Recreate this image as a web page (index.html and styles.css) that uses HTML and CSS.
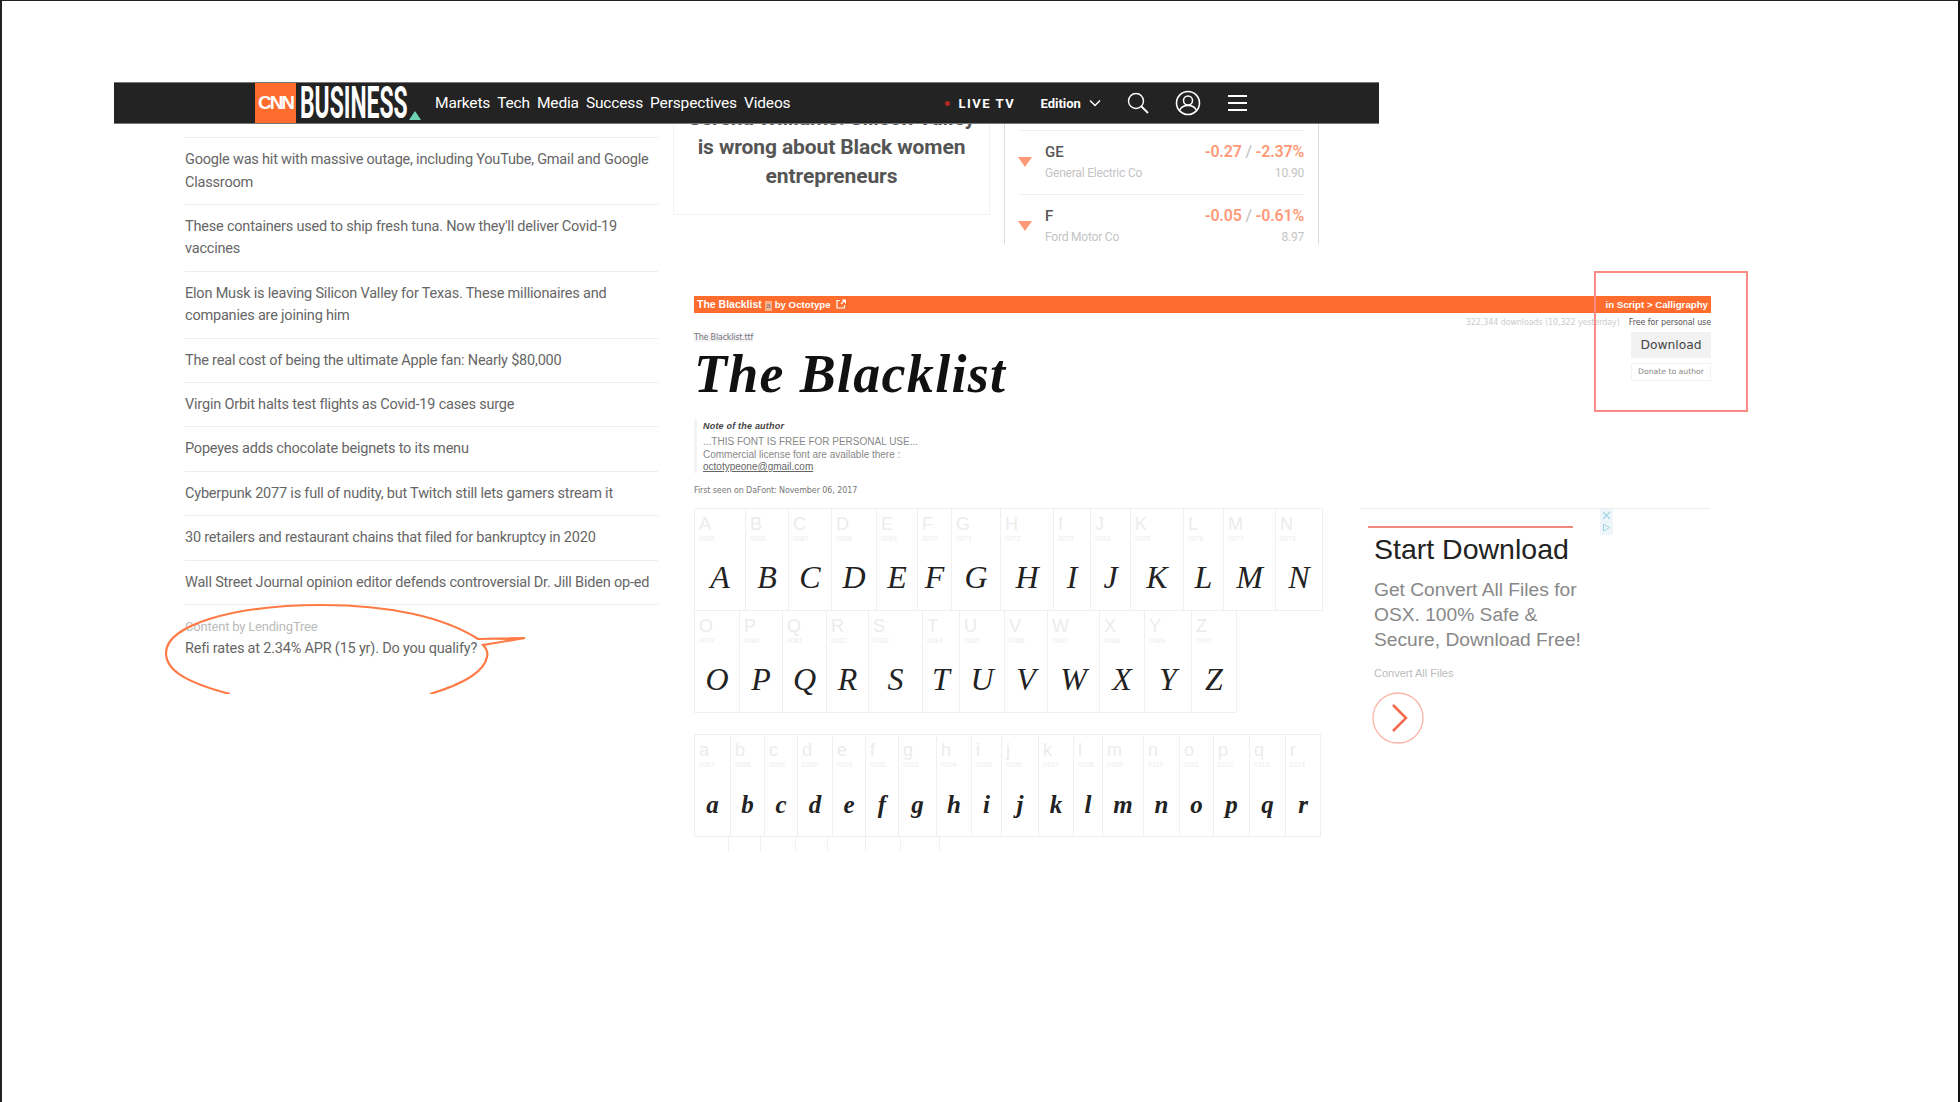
FILE: index.html
```html
<!DOCTYPE html>
<html lang="en">
<head>
<meta charset="utf-8">
<title>CNN Business clipping</title>
<link rel="stylesheet" href="styles.css">
</head>
<body>
<div class="slide">

  <section class="cnn">
    <header class="navbar">
      <div class="brand">
        <span class="cnn-logo">CNN</span>
        <span class="biz">BUSINESS</span>
        <svg class="tri" width="12" height="9" viewBox="0 0 12 9"><path d="M6 0L12 9H0z" fill="#6fd3b5"/></svg>
      </div>
      <nav class="links"><span>Markets</span><span>Tech</span><span>Media</span><span>Success</span><span>Perspectives</span><span>Videos</span></nav>
      <div class="tools">
        <span class="dot"></span><span class="live">LIVE TV</span>
        <span class="edition">Edition</span>
        <svg class="chev" width="12" height="8" viewBox="0 0 12 8"><path d="M1 1.500l5 5 5-5" fill="none" stroke="#fff" stroke-width="1.500"/></svg>
        <svg class="search" width="22" height="22" viewBox="0 0 22 22"><circle cx="9" cy="9" r="7.500" fill="none" stroke="#fff" stroke-width="1.400"/><path d="M14.500 14.500l6.500 6.500" stroke="#fff" stroke-width="1.800"/></svg>
        <svg class="user" width="26" height="26" viewBox="0 0 26 26"><circle cx="13" cy="13" r="11.500" fill="none" stroke="#fff" stroke-width="1.600"/><circle cx="13" cy="10.500" r="4.500" fill="none" stroke="#fff" stroke-width="1.500"/><path d="M4.500 20.500c1.500-3.500 5-5 8.500-5s7 1.500 8.500 5" fill="none" stroke="#fff" stroke-width="1.500"/></svg>
        <div class="burger"><i></i><i></i><i></i></div>
      </div>
    </header>
    <div class="cnn-body">
      <ul class="news">
        <li>Google was hit with massive outage, including YouTube, Gmail and Google Classroom</li>
        <li>These containers used to ship fresh tuna. Now they'll deliver Covid-19 vaccines</li>
        <li>Elon Musk is leaving Silicon Valley for Texas. These millionaires and companies are joining him</li>
        <li>The real cost of being the ultimate Apple fan: Nearly $80,000</li>
        <li>Virgin Orbit halts test flights as Covid-19 cases surge</li>
        <li>Popeyes adds chocolate beignets to its menu</li>
        <li>Cyberpunk 2077 is full of nudity, but Twitch still lets gamers stream it</li>
        <li>30 retailers and restaurant chains that filed for bankruptcy in 2020</li>
        <li>Wall Street Journal opinion editor defends controversial Dr. Jill Biden op-ed</li>
        <li class="sponsored"><small>Content by LendingTree</small>Refi rates at 2.34% APR (15 yr). Do you qualify?</li>
      </ul>
      <article class="feature"><h2>Serena Williams: Silicon Valley<br>is wrong about Black women<br>entrepreneurs</h2></article>
      <aside class="stocks">
        <div class="stock">
          <span class="down"></span>
          <div class="stock-main"><b>GE</b><small>General Electric Co</small></div>
          <div class="stock-num"><b>-0.27 <i>/</i> -2.37%</b><small>10.90</small></div>
        </div>
        <div class="stock">
          <span class="down"></span>
          <div class="stock-main"><b>F</b><small>Ford Motor Co</small></div>
          <div class="stock-num"><b>-0.05 <i>/</i> -0.61%</b><small>8.97</small></div>
        </div>
      </aside>
    </div>
    <svg class="bubble" width="380" height="91" viewBox="0 0 380 91"><path d="M66 91C24 80 2 68 2 50C2 22 70 2 158 2C225 2 280 14 314 36L361 35L319 42C323 46 324 50 323 54C320 70 296 82 266 91" fill="none" stroke="#ff7a45" stroke-width="2.200"/></svg>
  </section>

  <section class="dafont">
    <div class="titlebar"><span class="t-left"><b>The Blacklist</b> <em class="fonticon">a</em> <span class="by">by Octotype</span> <svg width="10" height="10" viewBox="0 0 10 10"><path d="M4 1.500H1v7.500h7.500V6M5 5l4-4M6 1h3.500v3.500" fill="none" stroke="#fff" stroke-width="1.200"/></svg></span><span class="t-right">in Script &gt; Calligraphy</span></div>
    <div class="meta-row"><span class="dl">322,344 downloads (10,322 yesterday)</span><span class="lic">Free for personal use</span></div>
    <div class="head">
      <div class="head-main">
        <div class="ttf">The Blacklist.ttf</div>
        <div class="sample">The Blacklist</div>
        <div class="note">
          <strong>Note of the author</strong>
          <p>...THIS FONT IS FREE FOR PERSONAL USE...<br>Commercial license font are available there :<br><u>octotypeone@gmail.com</u></p>
        </div>
        <div class="seen">First seen on DaFont: November 06, 2017</div>
      </div>
      <div class="actions"><button class="dl-btn">Download</button><button class="donate">Donate to author</button></div>
    </div>
    <div class="lower">
      <div class="glyphs" id="glyphs">
        <div class="row r1"></div>
        <div class="row r2"></div>
        <div class="row r3"></div>
        <div class="row r4"></div>
      </div>
      <div class="ad">
        <div class="adclose"><svg width="13" height="26" viewBox="0 0 13 26"><rect width="13" height="26" fill="#eef6fa"/><path d="M3 3l7 7M10 3l-7 7" stroke="#9fd5e6" stroke-width="1.200"/><path d="M3.500 15l6 3.500-6 3.500z" fill="none" stroke="#9fd5e6"/></svg></div>
        <div class="ad-rule"></div>
        <h3>Start Download</h3>
        <p>Get Convert All Files for OSX. 100% Safe &amp; Secure, Download Free!</p>
        <div class="ad-sub">Convert All Files</div>
        <svg class="ad-go" width="52" height="52" viewBox="0 0 52 52"><circle cx="26" cy="26" r="25" fill="none" stroke="#fbb5a8" stroke-width="1.300"/><path d="M21 13l13 13-13 13" fill="none" stroke="#f4694a" stroke-width="2.500"/></svg>
      </div>
    </div>
    <div class="callout"></div>
  </section>

</div>
<script src="glyphs.js"></script>
</body>
</html>
```
FILE: styles.css
```css
* { box-sizing: border-box; }
html, body { margin: 0; padding: 0; background: #fff; }
.slide {
  position: relative;
  width: 1960px;
  height: 1102px;
  overflow: hidden;
  background: #fff;
  border-left: 2px solid #222;
  border-right: 2px solid #111;
  border-top: 1px solid #222;
  font-family: "Liberation Sans", Arial, sans-serif;
}

/* CNN clipping */
.cnn { position: absolute; left: 112px; top: 81px; width: 1265px; height: 612px; }
.navbar {
  position: relative;
  z-index: 2;
  height: 42px;
  background: #232323;
  border-top: 1px solid #777;
  border-bottom: 1px solid #777;
  display: flex;
  align-items: center;
  color: #fff;
}
.brand { width: 321px; padding-left: 141px; height: 100%; display: flex; align-items: stretch; flex: none; position: relative; overflow: hidden; }
.cnn-logo {
  width: 41px; flex: none; background: #ff6d2e; color: #fff;
  font: 700 19px/40px "Liberation Sans", sans-serif;
  letter-spacing: -2px; text-align: center;
}
.biz {
  margin-left: 4px;
  font: 700 44px/41px "Roboto", sans-serif;
  display: block;
  transform: scaleX(.52);
  transform-origin: left center;
  white-space: nowrap;
  width: 100px;
}
.tri { position: absolute; left: 295px; bottom: 3px; }
.links { display: flex; gap: 7px; font: 400 15.500px/1 "Roboto", sans-serif; letter-spacing: -.15px; flex: none; padding-top: 2px; }
.tools { display: flex; align-items: center; margin-left: 155px; flex: none; }
.dot { width: 5px; height: 5px; border-radius: 50%; background: #b3261e; margin-right: 8px; }
.live { font: 700 13px/1 "Roboto", sans-serif; letter-spacing: 1.500px; width: 66px; }
.edition { font: 700 13px/1 "Roboto", sans-serif; margin-left: 16px; }
.chev { margin-left: 8px; }
.search { margin-left: 26px; }
.user { margin-left: 26px; }
.burger { margin-left: 27px; width: 19px; display: flex; flex-direction: column; gap: 5px; }
.burger i { display: block; height: 2px; background: #fff; }

.cnn-body { position: relative; height: 570px; }
.news {
  position: absolute; left: 71px; top: 13px; width: 473px;
  margin: 0; padding: 0; list-style: none;
  font: 400 14.500px/22.500px "Roboto", sans-serif;
  color: #666;
  letter-spacing: -.2px;
}
.news li { border-top: 1px solid #eee; padding: 11px 0 9.900px; }
.news small { display: block; font-size: 13px; color: #bbb; line-height: 22px; }

.feature {
  position: absolute; left: 559px; top: 0; width: 317px; height: 91px;
  border: 1px solid #f2f2f2; border-top: 0;
  overflow: hidden; text-align: center;
}
.feature h2 {
  margin: -20px 0 0; padding: 0;
  font: 700 21px/29px "Roboto", sans-serif;
  letter-spacing: -.1px;
  color: #555;
}

.stocks {
  position: absolute; left: 890px; top: 0; width: 315px; height: 120px;
  border-left: 1px solid #ddd; border-right: 1px solid #ddd;
  overflow: hidden;
  padding: 6px 14px 0 13px;
}
.stock { display: flex; align-items: flex-start; height: 64px; border-top: 1px solid #f0f0f0; padding-top: 11px; }
.down { width: 0; height: 0; border-left: 7px solid transparent; border-right: 7px solid transparent; border-top: 10px solid #ff9a78; margin-top: 15px; flex: none; }
.stock-main { margin-left: 13px; flex: 1; }
.stock-main b { display: block; font: 500 15px/20px "Roboto", sans-serif; color: #555; }
.stock small { display: block; font: 400 12px/14px "Roboto", sans-serif; color: #c4c4c4; margin-top: 4px; letter-spacing: -.2px; }
.stock-num { text-align: right; }
.stock-num b { display: block; font: 600 16px/20px "Roboto", sans-serif; color: #ff9a78; letter-spacing: -.2px; }
.stock-num i { font-style: normal; font-weight: 400; color: #bbb; }

.bubble { position: absolute; left: 50px; top: 521px; }

/* dafont clipping */
.dafont { position: absolute; left: 692px; top: 295px; width: 1054px; height: 556px; }
.titlebar {
  width: 1017px; height: 17px; background: #ff6d2e; color: #fff;
  display: flex; justify-content: space-between; align-items: center;
  font: 700 10.500px/17px "Liberation Sans", sans-serif; padding: 0 3px;
}
.t-left svg { vertical-align: -1px; margin-left: 2px; }
.by { font-size: 9.700px; }
.t-right { font-size: 9.700px; }
.fonticon { font-style: normal; display: inline-block; width: 7px; height: 10px; line-height: 9px; background: #fbb08a; color: #777; text-align: center; font-weight: 400; font-size: 8px; }
.meta-row {
  width: 1017px; height: 19px; display: flex; justify-content: flex-end; gap: 9px;
  font: 400 8px/20px "DejaVu Sans", sans-serif;
}
.dl { color: #ccc; letter-spacing: -.1px; }
.lic { color: #555; letter-spacing: -.1px; }
.head { width: 1017px; display: flex; justify-content: space-between; height: 178px; margin-top: -2px; }
.head-main { flex: 1; }
.ttf { font: 400 8px/9px "DejaVu Sans", sans-serif; color: #777; background: #f4f4f8; width: max-content; margin-top: 3px; letter-spacing: -.2px; }
.sample {
  font: italic 700 54px/58px "Liberation Serif", serif; color: #111;
  letter-spacing: 1.300px; height: 66px; padding-top: 3px; white-space: nowrap;
  width: max-content;
}
.note { margin: 11px 0 0; border-left: 3px solid #f4f4f4; padding-left: 6px; height: 54px; }
.note strong { display: block; font: italic 700 9px/14px "Liberation Sans", sans-serif; color: #444; letter-spacing: .2px; }
.note p { margin: 3px 0 0; font: 400 10px/12.500px "Liberation Sans", sans-serif; color: #888; }
.note u { color: #666; }
.seen { margin-top: 12px; font: 400 8px/12px "DejaVu Sans", sans-serif; color: #777; letter-spacing: -.1px; }
.actions { width: 80px; display: flex; flex-direction: column; align-items: stretch; gap: 5px; flex: none; margin-top: 2px; height: 52px; }
.dl-btn { height: 26px; background: #f2f2f2; border: 0; font: 400 12.300px/26px "DejaVu Sans", sans-serif; color: #444; padding: 0; }
.donate { height: 18px; background: #fff; border: 1px solid #f2f2f2; font: 400 7.700px/16px "DejaVu Sans", sans-serif; color: #888; padding: 0; }

.lower { display: flex; height: 340px; }
.glyphs { width: 666px; flex: none; }
.row { display: flex; height: 102.500px; width: max-content; border: 1px solid #f0f0f0; }
.r2 { border-top: 0; }
.r3 { margin-top: 21px; }
.r4 { border: 0; height: 14px; overflow: hidden; }
.cell { border-right: 1px solid #f0f0f0; position: relative; padding: 5px 0 0 4px; height: 100%; flex: none; }
.cell:last-child { border-right: 0; }
.r4 .cell { border-left: 0; }
.cell .big { display: block; font: 400 18px/20px "Liberation Sans", sans-serif; color: #ececec; }
.cell .code { display: block; font: 400 7px/9px "Liberation Sans", sans-serif; color: #ececec; }
.cell .gl { position: absolute; left: 0; right: 0; top: 48px; text-align: center; font: italic 400 32px/40px "Liberation Serif", serif; color: #222; white-space: nowrap; }
.r3 .cell .gl { top: 53px; font-size: 25px; font-weight: 700; line-height: 34px; }

.ad { width: 350px; border-top: 1px solid #eee; position: relative; padding: 17px 0 0 9px; flex: none; }
.adclose { position: absolute; left: 240px; top: 0; height: 26px; line-height: 0; }
.ad-rule { position: absolute; left: 8px; top: 17px; width: 205px; height: 2px; background: #f0897c; }
.ad h3 { margin: 5px 0 0 5px; font: 400 28.500px/36px "Liberation Sans", sans-serif; color: #222; }
.ad p { margin: 10px 0 0 5px; width: 222px; font: 400 19.200px/25px "Liberation Sans", sans-serif; color: #888; }
.ad-sub { margin: 13px 0 0 5px; font: 400 11px/16px "Liberation Sans", sans-serif; color: #bbb; }
.ad-go { display: block; margin: 11px 0 0 3px; }

.callout { position: absolute; left: 900px; top: -25px; width: 154px; height: 141px; border: 2px solid #fb8a84; }
```
FILE: glyphs.js
```js
var rows = [
  { sel: '.r1', widths: [51,43,43,45,41,34,49,53,37,40,53,40,52,46], start: 65, text: 'ABCDEFGHIJKLMN' },
  { sel: '.r2', widths: [45,43,44,42,54,37,45,43,52,45,47,44], start: 79, text: 'OPQRSTUVWXYZ' },
  { sel: '.r3', widths: [36,34,33,35,33,33,38,35,30,37,35,29,41,36,34,36,36,34], start: 97, text: 'abcdefghijklmnopqr' },
  { sel: '.r4', widths: [35,32,35,32,38,35,39,38], start: 115, text: '' }
];
rows.forEach(function (r) {
  var el = document.querySelector(r.sel);
  r.widths.forEach(function (w, i) {
    var c = document.createElement('div');
    c.className = 'cell';
    c.style.width = w + 'px';
    if (r.text) {
      var ch = r.text[i];
      var code = ('0000' + (r.start + i)).slice(-4);
      c.innerHTML = '<span class="big">' + ch + '</span><span class="code">' + code + '</span><span class="gl">' + ch + '</span>';
    }
    el.appendChild(c);
  });
});
```
